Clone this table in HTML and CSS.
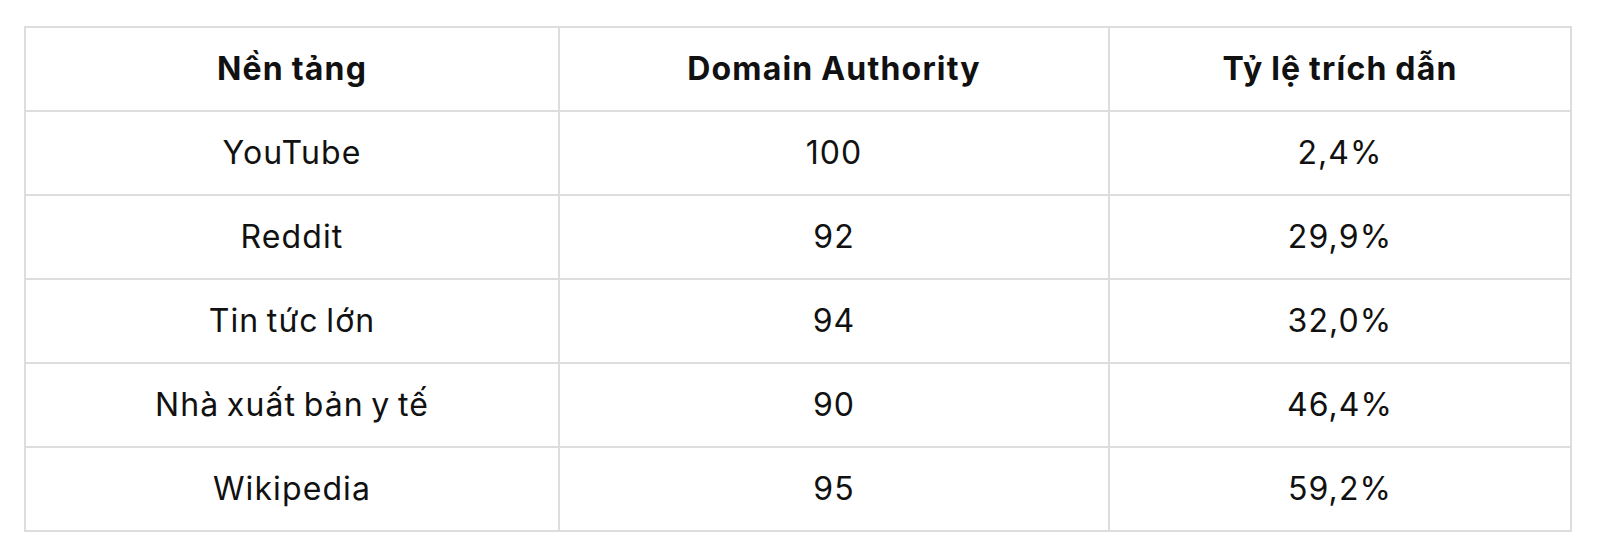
FILE: index.html
```html
<!DOCTYPE html>
<html lang="vi">
<head>
<meta charset="utf-8">
<title>Bảng</title>
<link rel="stylesheet" href="styles.css">
</head>
<body>
<table class="data">
  <colgroup>
    <col class="c1">
    <col class="c2">
    <col class="c3">
  </colgroup>
  <thead>
    <tr><th>Nền tảng</th><th>Domain Authority</th><th>Tỷ lệ trích dẫn</th></tr>
  </thead>
  <tbody>
    <tr><td>YouTube</td><td>100</td><td>2,4%</td></tr>
    <tr><td>Reddit</td><td>92</td><td>29,9%</td></tr>
    <tr><td>Tin tức lớn</td><td>94</td><td>32,0%</td></tr>
    <tr><td>Nhà xuất bản y tế</td><td>90</td><td>46,4%</td></tr>
    <tr><td>Wikipedia</td><td>95</td><td>59,2%</td></tr>
  </tbody>
</table>
</body>
</html>
```
FILE: styles.css
```css
html, body {
  margin: 0;
  background: #ffffff;
}
body {
  padding: 26px 28px 0 24px;
  font-family: Inter, "Noto Sans", sans-serif;
  color: #111111;
}
.data {
  border-collapse: collapse;
  width: 1546px;
  table-layout: fixed;
}
.c1 { width: 534px; }
.c2 { width: 550px; }
.c3 { width: 462px; }
.data th,
.data td {
  border: 2px solid #dddddd;
  padding: 17px 16px;
  font-size: 32px;
  line-height: 48px;
  text-align: center;
  font-weight: 400;
  letter-spacing: 1.1px;
  word-spacing: -2.5px;
}
.data th {
  font-weight: 700;
  letter-spacing: 1.2px;
  word-spacing: -1px;
}
```
